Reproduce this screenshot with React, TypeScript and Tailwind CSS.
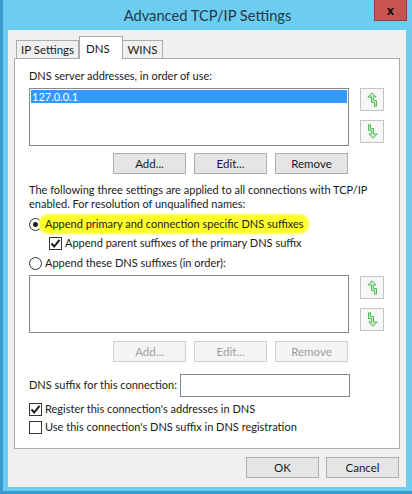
import type { ReactNode } from 'react';

const font = { fontFamily: 'Lato, "Noto Sans", sans-serif' };

function UpArrow() {
  return (
    <svg width="11" height="15" viewBox="0 0 11 15">
      <path
        d="M5 0.8 L9.2 5 L6.5 5 L6.5 8.5 L9.5 8.5 L9.5 14.2 L7.5 14.2 L7.5 10.5 L4.5 10.5 L4.5 5 L0.8 5 Z"
        fill="#c6efc6"
        stroke="#4fb95a"
        strokeWidth="1"
        strokeLinejoin="round"
      />
    </svg>
  );
}

function DownArrow() {
  return (
    <svg width="11" height="15" viewBox="0 0 11 15" className="rotate-180">
      <path
        d="M5 0.8 L9.2 5 L6.5 5 L6.5 8.5 L9.5 8.5 L9.5 14.2 L7.5 14.2 L7.5 10.5 L4.5 10.5 L4.5 5 L0.8 5 Z"
        fill="#c6efc6"
        stroke="#4fb95a"
        strokeWidth="1"
        strokeLinejoin="round"
      />
    </svg>
  );
}

function MoveButtons({ gap }: { gap: string }) {
  return (
    <div className={`flex flex-col ${gap}`}>
      <div className="w-[24px] h-[23px] border border-[#c4c4c4] bg-[#f7f7f7] flex items-center justify-center">
        <UpArrow />
      </div>
      <div className="w-[24px] h-[23px] border border-[#c4c4c4] bg-[#f7f7f7] flex items-center justify-center">
        <DownArrow />
      </div>
    </div>
  );
}

function Button({ children, disabled }: { children: ReactNode; disabled?: boolean }) {
  return (
    <div
      className={
        disabled
          ? 'w-[73px] h-[21px] border border-[#cfcfcf] bg-[#f4f4f4] text-[#9d9d9d] flex items-center justify-center text-[11.5px]'
          : 'w-[73px] h-[21px] border border-[#adadad] bg-[#e5e5e5] text-[#1a1a1a] flex items-center justify-center text-[11.5px]'
      }
    >
      {children}
    </div>
  );
}

function Radio({ checked }: { checked?: boolean }) {
  return (
    <div className="w-[13px] h-[13px] rounded-full border border-[#333] bg-white flex items-center justify-center shrink-0">
      {checked && <div className="w-[5px] h-[5px] rounded-full bg-[#1a1a1a]" />}
    </div>
  );
}

function Checkbox({ checked }: { checked?: boolean }) {
  return (
    <div className="w-[13px] h-[13px] border border-[#333] bg-white flex items-center justify-center shrink-0">
      {checked && (
        <svg width="11" height="11" viewBox="0 0 11 11">
          <path d="M1.5 5.5 L4.2 8.5 L9.5 1.8" fill="none" stroke="#1a1a1a" strokeWidth="2" />
        </svg>
      )}
    </div>
  );
}

export default function App() {
  return (
    <div
      className="w-[412px] h-[494px] bg-[#6ccdf1] border-l-[3px] border-b-[3px] border-[#3b9bd0] flex flex-col text-[11px] text-[#1a1a1a] whitespace-nowrap"
      style={font}
    >
      {/* Title bar */}
      <div className="h-[30px] shrink-0 grid grid-cols-[1fr_auto_1fr]">
        <div />
        <div className="text-[14.7px] text-[#22384a] leading-[30px]">Advanced TCP/IP Settings</div>
        <div className="flex justify-end pr-[5px]">
          <div className="w-[33px] h-[21px] bg-[#c75450] border border-[#9c3a36] border-t-0 flex items-center justify-center text-[13px] font-bold text-black leading-none">
            x
          </div>
        </div>
      </div>

      {/* Client area */}
      <div className="ml-[5px] mr-[6px] h-[457px] bg-[#f0f0f0] pt-[6px] px-[6px]">
        {/* Tabs */}
        <div className="flex items-end h-[22px] pl-[2px] text-[11.5px]">
          <div className="h-[18px] w-[63px] border border-b-0 border-[#acacac] bg-[#f0f0f0] flex items-center justify-center">
            IP Settings
          </div>
          <div className="relative z-10 -mb-px h-[23px] w-[44px] border border-b-0 border-[#acacac] bg-white pl-[6px] pt-[3px]">
            DNS
          </div>
          <div className="h-[18px] w-[40px] border border-l-0 border-b-0 border-[#acacac] bg-[#f0f0f0] flex items-center justify-center">
            WINS
          </div>
        </div>

        {/* Tab panel */}
        <div className="h-[391px] overflow-hidden border border-[#acacac] bg-white pl-[14px] pt-[9px]">
          <div className="leading-[15px]">DNS server addresses, in order of use:</div>
          <div className="mt-[5px] flex gap-[11px]">
            <div className="w-[320px] h-[58px] border border-[#828790] bg-white p-[1px]">
              <div className="h-[13px] bg-[#3399ff] text-white leading-[13px] pl-[1px]">127.0.0.1</div>
            </div>
            <MoveButtons gap="gap-[9px]" />
          </div>
          <div className="mt-[7px] w-[320px] flex justify-end gap-[8px] pr-[1px]">
            <Button>Add...</Button>
            <Button>Edit...</Button>
            <Button>Remove</Button>
          </div>

          <div className="mt-[9px] leading-[14px]">
            The following three settings are applied to all connections with TCP/IP
            <br />
            enabled. For resolution of unqualified names:
          </div>
          <div className="mt-[4px] h-[18px] flex items-center">
            <Radio checked />
            <span className="ml-[-2px] pl-[5px] pr-[4px] h-[18px] leading-[18px] rounded-[8px] bg-[#ffff2a] shadow-[0_0_3px_1px_#ffff60]">
              Append primary and connection specific DNS suffixes
            </span>
          </div>
          <div className="mt-[1px] h-[18px] flex items-center gap-[3px] pl-[20px]">
            <Checkbox checked />
            <span>Append parent suffixes of the primary DNS suffix</span>
          </div>
          <div className="mt-[2px] h-[18px] flex items-center gap-[3px]">
            <Radio />
            <span>Append these DNS suffixes (in order):</span>
          </div>

          <div className="mt-[3px] flex gap-[11px]">
            <div className="w-[320px] h-[58px] border border-[#828790] bg-white" />
            <div className="pt-[1px]">
              <MoveButtons gap="gap-[9px]" />
            </div>
          </div>
          <div className="mt-[8px] w-[320px] flex justify-end gap-[8px] pr-[1px]">
            <Button disabled>Add...</Button>
            <Button disabled>Edit...</Button>
            <Button disabled>Remove</Button>
          </div>

          <div className="mt-[12px] w-[321px] flex items-center justify-between">
            <span>DNS suffix for this connection:</span>
            <div className="w-[170px] h-[23px] border border-[#828790] bg-white" />
          </div>
          <div className="mt-[3px] h-[18px] flex items-center gap-[3px]">
            <Checkbox checked />
            <span>Register this connection's addresses in DNS</span>
          </div>
          <div className="h-[18px] flex items-center gap-[3px]">
            <Checkbox />
            <span>Use this connection's DNS suffix in DNS registration</span>
          </div>
        </div>

        {/* Dialog buttons */}
        <div className="mt-[8px] flex justify-end gap-[7px] pr-[1px]">
          <Button>OK</Button>
          <Button>Cancel</Button>
        </div>
      </div>
    </div>
  );
}
